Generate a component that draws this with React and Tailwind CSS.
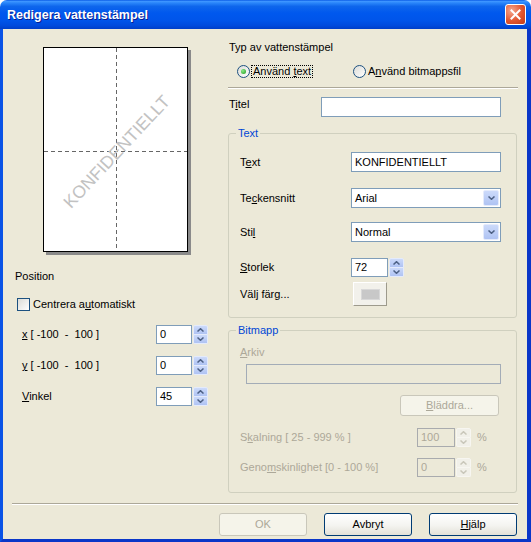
import React from "react";

function U({ children }) {
  return <span className="underline decoration-1 underline-offset-[1px]">{children}</span>;
}

function Chev({ up, color }) {
  return (
    <svg width="7" height="4" viewBox="0 0 7 4">
      <path
        d={up ? "M0.5 3.5L3.5 0.7L6.5 3.5" : "M0.5 0.5L3.5 3.3L6.5 0.5"}
        fill="none"
        stroke={color}
        strokeWidth="1.5"
      />
    </svg>
  );
}

function SpinBtn({ disabled }) {
  const half = disabled
    ? "border-[#F7F6F1] bg-[#F1F0E9]"
    : "border-[#E4EBFC] bg-[linear-gradient(to_bottom,#CCDAFA,#AFC3F3)]";
  const c = disabled ? "#C9C7BA" : "#4D6185";
  return (
    <div className="w-[15px] h-[19px] flex flex-col">
      <div className={`h-[10px] flex items-center justify-center rounded-t-[2px] border ${half}`}>
        <Chev up color={c} />
      </div>
      <div className={`h-[9px] flex items-center justify-center rounded-b-[2px] border border-t-0 ${half}`}>
        <Chev color={c} />
      </div>
    </div>
  );
}

function Spin({ value, w, disabled }) {
  return (
    <div className="flex items-center gap-[1px]">
      <div
        className={`${w} h-[19px] border pl-[3px] flex items-center leading-[13px] ${
          disabled ? "border-[#A9ABAE] bg-[#ECE9D8] text-[#ACA899]" : "border-[#7F9DB9] bg-white text-black"
        }`}
      >
        {value}
      </div>
      <SpinBtn disabled={disabled} />
    </div>
  );
}

function Combo({ value }) {
  return (
    <div className="w-[150px] h-[20px] border border-[#7F9DB9] bg-white flex items-center pl-[3px] pr-[1px]">
      <span className="flex-1 leading-[13px]">{value}</span>
      <div className="w-[16px] h-[16px] rounded-[2px] border border-[#E4EBFC] bg-[linear-gradient(to_bottom,#CCDAFA,#AFC3F3)] flex items-center justify-center">
        <Chev color="#4D6185" />
      </div>
    </div>
  );
}

function TextBox({ value, className }) {
  return (
    <div className={`h-[20px] border border-[#7F9DB9] bg-white flex items-center pl-[3px] leading-[13px] ${className}`}>
      {value}
    </div>
  );
}

function Btn({ children, disabled, className }) {
  return (
    <div
      className={`rounded-[3px] border flex items-center justify-center leading-[13px] ${
        disabled
          ? "border-[#C9C7BA] bg-[#F5F4EA] text-[#ACA899]"
          : "border-[#003C74] bg-[linear-gradient(to_bottom,#FFFFFF,#F4F4F0_55%,#E3E1D8)] text-black"
      } ${className}`}
    >
      {children}
    </div>
  );
}

function Radio({ checked }) {
  return (
    <div className="w-[13px] h-[13px] shrink-0 rounded-full border border-[#1C5180] bg-[linear-gradient(135deg,#DCDCD7,#FFFFFF)] flex items-center justify-center">
      {checked && (
        <div className="w-[5px] h-[5px] rounded-full bg-[radial-gradient(circle_at_35%_35%,#8BEA88,#1B9B1B)]" />
      )}
    </div>
  );
}

export default function App() {
  return (
    <div className="w-[531px] h-[542px] flex flex-col bg-white font-['Liberation_Sans',Arial,sans-serif] text-[11px] text-black">
      {/* Title bar */}
      <div className="h-[29px] shrink-0 rounded-t-[7px] bg-[linear-gradient(to_bottom,#0A5BE6_0%,#3D95FF_5%,#2A86FA_10%,#0E66EC_22%,#0058EE_45%,#0055EA_70%,#004BDD_88%,#003FC8_100%)] flex items-center pl-[7px] pr-[5px]">
        <div className="flex-1 text-white font-bold text-[12.5px] leading-[16px] [text-shadow:1px_1px_#0A1D8F]">
          Redigera vattenstämpel
        </div>
        <div className="w-[21px] h-[21px] rounded-[3px] border border-white bg-[radial-gradient(circle_at_30%_30%,#F5A88F,#E2552F_55%,#C23A15)] flex items-center justify-center">
          <svg width="11" height="11" viewBox="0 0 11 11">
            <path d="M1.5 1.5L9.5 9.5M9.5 1.5L1.5 9.5" stroke="white" strokeWidth="2" strokeLinecap="square" />
          </svg>
        </div>
      </div>

      {/* Body */}
      <div className="flex-1 flex flex-col border-l-[3px] border-r-[4px] border-b-[3px] border-l-[#0A53E6] border-r-[#0A36C8] border-b-[#0A36C8] bg-[#ECE9D8]">
        <div className="flex">
          {/* Left column */}
          <div className="w-[217px] flex flex-col">
            <div className="mt-[18px] ml-[40px] relative w-[145px] h-[205px] border border-black bg-white shadow-[3px_3px_0_0_#8A8A8A] overflow-hidden">
              <svg className="absolute inset-0" width="143" height="203">
                <line x1="72.5" y1="0" x2="72.5" y2="203" stroke="#666" strokeDasharray="4 3" />
                <line x1="0" y1="103.5" x2="143" y2="103.5" stroke="#666" strokeDasharray="4 3" />
              </svg>
              <div className="absolute left-[73px] top-[104px] -translate-x-1/2 -translate-y-1/2 -rotate-[47deg] whitespace-nowrap text-[17.5px] leading-[17px] text-[#C2C2C2]">
                KONFIDENTIELLT
              </div>
            </div>
            <div className="mt-[18px] pl-[12px] leading-[13px]">Position</div>
            <div className="mt-[15px] pl-[14px] flex items-center h-[13px]">
              <div className="w-[13px] h-[13px] border border-[#1C5180] bg-[linear-gradient(135deg,#DCDCD7,#FFFFFF)]" />
              <span className="ml-[3px] leading-[13px]">
                Centrera a<U>u</U>tomatiskt
              </span>
            </div>
            <div className="mt-[14px] flex items-center pl-[19px]">
              <div className="w-[134px] leading-[13px]">
                <U>x</U> [ -100&nbsp; - &nbsp;100 ]
              </div>
              <Spin value="0" w="w-[36px]" />
            </div>
            <div className="mt-[12px] flex items-center pl-[19px]">
              <div className="w-[134px] leading-[13px]">
                <U>y</U> [ -100&nbsp; - &nbsp;100 ]
              </div>
              <Spin value="0" w="w-[36px]" />
            </div>
            <div className="mt-[12px] flex items-center pl-[19px]">
              <div className="w-[134px] leading-[13px]">
                <U>V</U>inkel
              </div>
              <Spin value="45" w="w-[36px]" />
            </div>
          </div>

          {/* Right column */}
          <div className="flex-1 flex flex-col">
            <div className="mt-[12px] pl-[9px] leading-[13px]">Typ av vattenstämpel</div>
            <div className="mt-[11px] h-[13px] flex items-center pl-[17px]">
              <div className="w-[116px] flex items-center">
                <Radio checked />
                <span className="ml-[1px] px-[1px] leading-[11px] border border-dotted border-black">
                  Använd <U>t</U>ext
                </span>
              </div>
              <Radio />
              <span className="ml-[2px] leading-[13px]">
                A<U>n</U>vänd bitmappsfil
              </span>
            </div>
            <div className="mt-[9px] ml-[8px] w-[290px] border-t border-t-[#ACA899] border-b border-b-white" />
            <div className="mt-[8px] flex items-start pl-[9px]">
              <div className="w-[92px] mt-[1px] leading-[13px]">
                T<U>i</U>tel
              </div>
              <TextBox value="" className="w-[180px]" />
            </div>

            {/* Text group */}
            <fieldset className="mt-[10px] ml-[8px] w-[289px] border border-[#D0D0BF] rounded-[3px] pb-[11px]">
              <legend className="ml-[7px] px-[2px] leading-[13px] text-[#0046D5]">Text</legend>
              <div className="pl-[11px] flex flex-col">
                <div className="mt-[12px] flex items-center">
                  <div className="w-[111px] leading-[13px]">
                    T<U>e</U>xt
                  </div>
                  <TextBox value="KONFIDENTIELLT" className="w-[150px]" />
                </div>
                <div className="mt-[16px] flex items-center">
                  <div className="w-[111px] leading-[13px]">
                    Te<U>c</U>kensnitt
                  </div>
                  <Combo value="Arial" />
                </div>
                <div className="mt-[14px] flex items-center">
                  <div className="w-[111px] leading-[13px]">
                    Sti<U>l</U>
                  </div>
                  <Combo value="Normal" />
                </div>
                <div className="mt-[16px] flex items-center">
                  <div className="w-[111px] leading-[13px]">
                    <U>S</U>torlek
                  </div>
                  <Spin value="72" w="w-[37px]" />
                </div>
                <div className="mt-[5px] flex items-center">
                  <div className="w-[113px] leading-[13px]">Välj färg...</div>
                  <div className="w-[34px] h-[24px] border border-t-white border-l-white border-r-[#9D9A8C] border-b-[#9D9A8C] bg-[#F2F1EB] flex items-center justify-center">
                    <div className="w-[19px] h-[11px] bg-[#C8C8C8] border border-[#D8D8D8]" />
                  </div>
                </div>
              </div>
            </fieldset>

            {/* Bitmap group */}
            <fieldset className="mt-[6px] ml-[8px] w-[289px] border border-[#D0D0BF] rounded-[3px] pb-[15px] text-[#ACA899]">
              <legend className="ml-[7px] px-[2px] leading-[13px] text-[#0046D5]">Bitmapp</legend>
              <div className="pl-[11px] flex flex-col">
                <div className="mt-[9px] leading-[13px]">
                  <U>A</U>rkiv
                </div>
                <div className="mt-[5px] ml-[6px] w-[255px] h-[20px] border border-[#A3ACB7] bg-[#ECE9D8]" />
                <Btn disabled className="mt-[11px] ml-[160px] w-[99px] h-[21px]">
                  <span>
                    <U>B</U>läddra...
                  </span>
                </Btn>
                <div className="mt-[12px] flex items-center">
                  <div className="w-[177px] leading-[13px]">
                    S<U>k</U>alning [ 25 - 999 % ]
                  </div>
                  <Spin value="100" w="w-[38px]" disabled />
                  <span className="ml-[6px] leading-[13px]">%</span>
                </div>
                <div className="mt-[11px] flex items-center">
                  <div className="w-[177px] leading-[13px]">
                    Geno<U>m</U>skinlighet [0 - 100 %]
                  </div>
                  <Spin value="0" w="w-[38px]" disabled />
                  <span className="ml-[6px] leading-[13px]">%</span>
                </div>
              </div>
            </fieldset>
          </div>
        </div>

        <div className="mt-[10px] mx-[9px] border-t border-t-[#ACA899] border-b border-b-white" />

        <div className="mt-[8px] flex justify-end gap-[17px] pr-[10px]">
          <Btn disabled className="w-[88px] h-[23px]">OK</Btn>
          <Btn className="w-[88px] h-[23px]">Avbryt</Btn>
          <Btn className="w-[88px] h-[23px]">
            <span>
              <U>H</U>jälp
            </span>
          </Btn>
        </div>
      </div>
    </div>
  );
}
